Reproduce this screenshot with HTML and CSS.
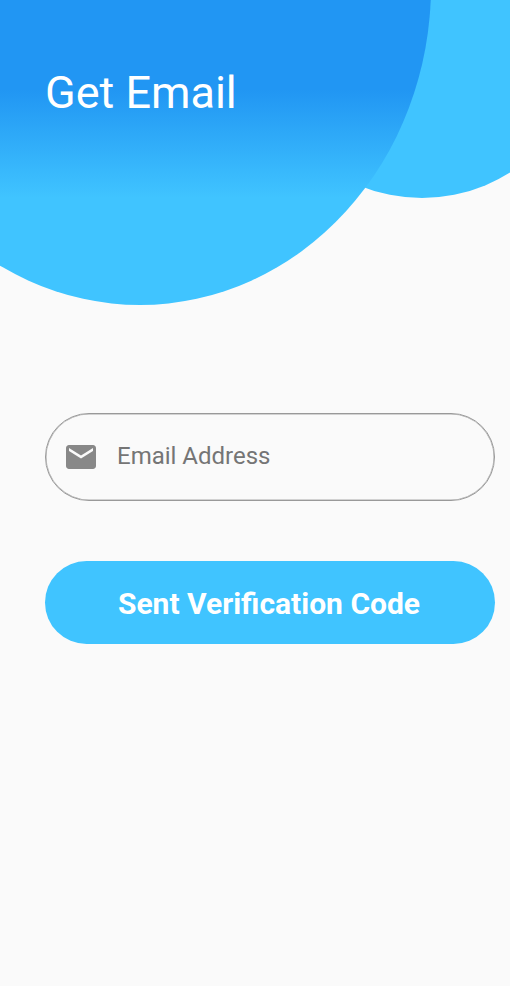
FILE: index.html
```html
<!DOCTYPE html>
<html lang="en">
<head>
<meta charset="utf-8">
<title>Get Email</title>
<link rel="stylesheet" href="styles.css">
</head>
<body>
<main class="screen">
  <header class="header">
    <div class="shape shape-small"></div>
    <div class="shape shape-large"></div>
    <h1 class="title">Get Email</h1>
  </header>
  <form class="form">
    <label class="field">
      <svg class="mail-icon" viewBox="2 4 20 16" aria-hidden="true"><path fill="currentColor" d="M20 4H4c-1.100 0-1.990.9-1.990 2L2 18c0 1.100.9 2 2 2h16c1.100 0 2-.9 2-2V6c0-1.100-.9-2-2-2zm0 4l-8 5-8-5V6l8 5 8-5v2z"/></svg>
      <input class="input" type="email" placeholder="Email Address">
    </label>
    <button class="submit" type="button">Sent Verification Code</button>
  </form>
</main>
</body>
</html>
```

FILE: styles.css
```css
* {
  box-sizing: border-box;
}

body {
  margin: 0;
  background: #fafafa;
  font-family: Roboto, sans-serif;
}

.screen {
  min-height: 986px;
  overflow: hidden;
}

.header {
  position: relative;
  height: 413px;
  padding: 66px 45px 0;
}

.shape {
  position: absolute;
  border-radius: 50%;
}

.shape-small {
  left: 257px;
  top: -132px;
  width: 330px;
  height: 330px;
  background: #40c4ff;
}

.shape-large {
  left: -151px;
  top: -333px;
  width: 582px;
  height: 638px;
  background: linear-gradient(#2196f3 423px, #40c4ff 531px);
}

.title {
  position: relative;
  margin: 0;
  color: #fff;
  font-size: 45px;
  font-weight: 400;
  line-height: 54px;
}

.form {
  display: flex;
  flex-direction: column;
  gap: 60px;
  padding: 0 15px 0 45px;
}

.field {
  display: flex;
  align-items: center;
  gap: 21px;
  height: 88px;
  padding: 0 20px;
  border: 1px solid #999;
  border-radius: 44px;
  box-shadow: inset 0 0 0 0.5px #aaa;
}

.mail-icon {
  flex: none;
  width: 30px;
  height: 24px;
  color: #888;
}

.input {
  flex: 1;
  min-width: 0;
  padding: 0 0 3px;
  border: 0;
  outline: 0;
  background: none;
  font: 400 24px/30px Roboto, sans-serif;
}

.input::placeholder {
  color: #757575;
  opacity: 1;
}

.submit {
  height: 83px;
  padding: 2px 2px 0 0;
  border: 0;
  border-radius: 42px;
  background: #40c4ff;
  color: #fff;
  font: 700 30px/36px Roboto, sans-serif;
}
```
